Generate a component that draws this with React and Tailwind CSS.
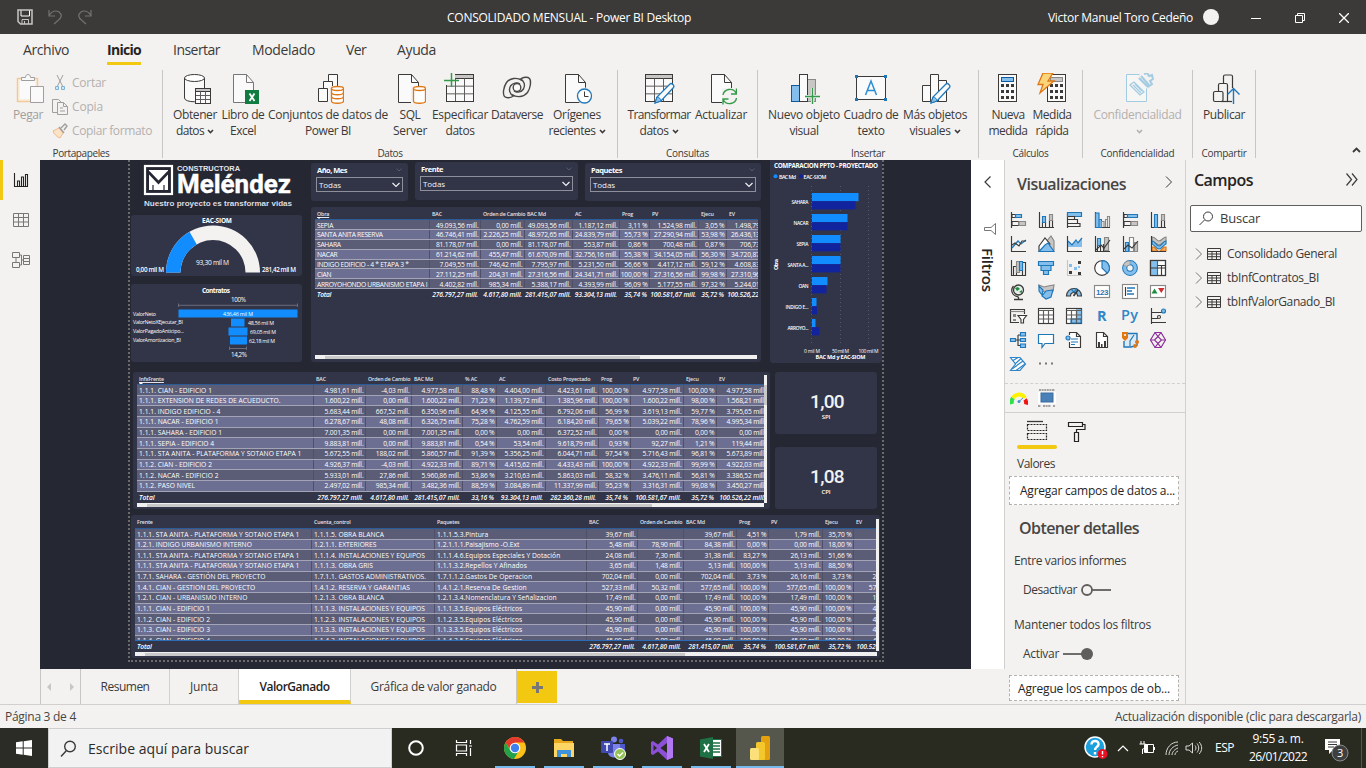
import React, { useLayoutEffect, useRef } from "react";

/* Text with a fixed advance width: spacing between letters is adapted to fill it. */
function T({ w, children, className = "" }) {
  const ref = useRef(null);
  useLayoutEffect(() => {
    const el = ref.current;
    el.style.letterSpacing = "0px";
    const n = el.textContent.length;
    el.style.letterSpacing = (w - el.getBoundingClientRect().width) / n + "px";
  }, [w, children]);
  return (
    <span ref={ref} className={"inline-block whitespace-pre " + className}>
      {children}
    </span>
  );
}

const D = "#3b3a39";
const B = "#1f77b8";
const L = "#83beec";
const G = "#c8c6c4";
const M = "#8a8886";

function Svg({ s = 32, w, h, vb, className = "", children }) {
  return (
    <svg
      width={w || s}
      height={h || s}
      viewBox={vb || `0 0 ${w || s} ${h || s}`}
      fill="none"
      stroke={D}
      strokeWidth="1"
      className={"block shrink-0 " + className}
    >
      {children}
    </svg>
  );
}

function Chevron({ color = D }) {
  return (
    <Svg w={7} h={5} className="ml-[3px] inline-block">
      <path d="M1 1l2.5 2.6L6 1" stroke={color} strokeWidth="1.5" />
    </Svg>
  );
}

/* ---------- title bar ---------- */
function TitleBar() {
  return (
    <div className="flex h-[34px] items-center bg-[#3b3a39] text-[12px] text-white">
      <div className="flex w-[447px] items-center pl-[17px]">
        <Svg s={16}>
          <path d="M1 1h14v14H3.500L1 12.500z" stroke="#c8c6c4" strokeWidth="1.5" />
          <path d="M4 1.500v5.500h8.500V1.500" stroke="#fff" />
          <path d="M5 15v-4.500h6.500V15M7.500 12v3" stroke="#c8c6c4" />
        </Svg>
        <Svg s={16} className="ml-[14px]">
          <path d="M2 1v6h6M2 6.500C5 2 9 1 12 3c3.500 2.500 2.500 6-.5 8L7 15" stroke="#74726f" strokeWidth="1.200" />
        </Svg>
        <Svg s={16} className="ml-[14px]">
          <path d="M14 1v6H8M14 6.500C11 2 7 1 4 3 .5 5.500 1.500 9 4.500 11L9 15" stroke="#74726f" strokeWidth="1.200" />
        </Svg>
      </div>
      <div className="w-[601px] pt-[1px]">
        <T w={244}>CONSOLIDADO MENSUAL - Power BI Desktop</T>
      </div>
      <div className="w-[155px] pt-[1px]">
        <T w={145}>Victor Manuel Toro Cedeño</T>
      </div>
      <div className="h-4 w-4 rounded-full bg-[#f3f2f1]" />
      <Svg w={10} h={10} className="ml-[32px] mt-[2px]">
        <path d="M0 5.500h10" stroke="#fff" />
      </Svg>
      <Svg w={10} h={10} className="ml-[34px] mt-[2px]">
        <path d="M.5 2.500h7v7h-7zM2.500 2.500v-2h7v7h-2" stroke="#fff" />
      </Svg>
      <Svg w={10} h={10} className="ml-[34px] mt-[2px]">
        <path d="M0 0l10 10M10 0L0 10" stroke="#fff" strokeWidth="1.300" />
      </Svg>
    </div>
  );
}

function MenuTabs() {
  const items = [
    ["Archivo", 46, "ml-[23px]"],
    ["Inicio", 34, "ml-[38px]"],
    ["Insertar", 47, "ml-[32px]"],
    ["Modelado", 63, "ml-[32px]"],
    ["Ver", 20, "ml-[31px]"],
    ["Ayuda", 39, "ml-[31px]"],
  ];
  return (
    <div className="flex h-[32px] bg-[#f3f2f1] text-[14px] text-[#3b3a39]">
      {items.map(([t, w, ml]) => (
        <div key={t} className={"flex h-[31px] flex-col " + ml}>
          <div className={"h-[28px] leading-[32px] " + (t === "Inicio" ? "font-bold text-[#252423]" : "")}>
            <T w={w}>{t}</T>
          </div>
          {t === "Inicio" && <div className="h-[3px] bg-[#f2c811]" />}
        </div>
      ))}
    </div>
  );
}

/* ---------- ribbon ---------- */
const Doc = ({ x = 5 }) => (
  <g transform={`translate(${x} 0)`}>
    <path d="M.5 1.500h13l7 8v20H.5z" fill="#fafafa" />
    <path d="M13.500 1.500v8h7" />
  </g>
);
const Grid = ({ x, y, w, h, cols = 3, rows = 3, head = 4 }) => (
  <g>
    <rect x={x} y={y} width={w} height={h} fill="#fafafa" />
    <rect x={x} y={y} width={w} height={head} fill="#c8c6c4" />
    {Array.from({ length: rows - 1 }, (_, i) => (
      <path key={"r" + i} d={`M${x} ${y + head + ((h - head) / rows) * (i + 1)}h${w}`} stroke="#605e5c" />
    ))}
    {Array.from({ length: cols - 1 }, (_, i) => (
      <path key={"c" + i} d={`M${x + (w / cols) * (i + 1)} ${y + head}v${h - head}`} stroke="#605e5c" />
    ))}
    <rect x={x} y={y} width={w} height={h} />
  </g>
);
const Pencil = ({ x, y }) => (
  <g transform={`translate(${x} ${y})`}>
    <path d="M1 20l2-6L16 1c1.500-1.500 5 1.500 3.500 3.500L7 18z" fill="#fafafa" stroke={B} strokeWidth="1.300" />
    <path d="M1 20l2-6c2 0 4 2 4 4z" fill={L} stroke={B} />
  </g>
);
const Calc = ({ x = 6, faded }) => (
  <g transform={`translate(${x} 0)`}>
    <rect x=".5" y="1.500" width="18" height="27" fill="#fafafa" />
    <rect x="3.500" y="4.500" width="12" height="4" fill={faded ? G : L} stroke={faded ? M : "#10599c"} />
    {[11, 17, 23].map((yy) =>
      [3, 8, 13].map((xx) => <rect key={xx + "-" + yy} x={xx} y={yy} width="3" height="3" fill={D} stroke="none" />)
    )}
  </g>
);
const OrangeDb = () => (
  <>
    <path d="M19.500 15v13c0 3 12 3 12 0V15" fill="#fff" stroke="#e07715" strokeWidth="1.300" />
    <ellipse cx="25.500" cy="15.500" rx="6" ry="2" fill="#fff" stroke="#e07715" strokeWidth="1.300" />
  </>
);
const DvLoop = () => (
  <path d="M21 7.500C16 4 9 5 5.500 9.500 2.500 14 1.500 21 3.500 23.500c2 2 6 1.500 9-.5-4-2-5-6.500-3-10 2-3 6.500-4 9.500-2" />
);

const RI = {
  obtener: (
    <Svg>
      <path d="M5.500 5v20c0 5 20 5 20 0V5" fill="#fafafa" />
      <ellipse cx="15.500" cy="5" rx="10" ry="3.500" fill="#fff" />
      <Grid x={16.500} y={15.500} w={15} h={15} head={3} />
    </Svg>
  ),
  excel: (
    <Svg>
      <g stroke="#797775"><Doc x={6} /></g>
      <rect x="18" y="17" width="14" height="14" fill="#107c41" stroke="none" />
      <path d="M22.500 20.500l5 7.500M27.500 20.500l-5 7.500" stroke="#fff" strokeWidth="1.800" />
    </Svg>
  ),
  conj: (
    <Svg>
      <path d="M16.500 17.500v-16h9v16z" fill="#fafafa" />
      <path d="M11.500 28.500V8.500h9v20" fill="#fafafa" />
      <path d="M6.500 15.500h9v13h-9z" fill="#fafafa" />
      <path d="M17 13h15v18H17z" fill="#f3f2f1" stroke="none" />
      <OrangeDb />
      <path d="M19.500 19.500c0 3 12 3 12 0M19.500 23.500c0 3 12 3 12 0" stroke="#e07715" strokeWidth="1.300" />
    </Svg>
  ),
  sql: (
    <Svg>
      <Doc x={4} />
      <path d="M17 13h15v18H17z" fill="#f3f2f1" stroke="none" />
      <OrangeDb />
    </Svg>
  ),
  espec: (
    <Svg>
      <Grid x={2.500} y={1.500} w={27} h={27} />
      <path d="M0 0h11v12H0z" fill="#f3f2f1" stroke="none" />
      <path d="M7.500 0v14M0 7.500h15" stroke="#349a49" strokeWidth="1.500" />
    </Svg>
  ),
  dataverse: (
    <Svg>
      <g strokeWidth="1.400" stroke="#4a4846">
        <DvLoop />
        <g transform="rotate(180 16 14.500)"><DvLoop /></g>
        <ellipse cx="16" cy="14.500" rx="3.800" ry="4" fill="#fafafa" />
      </g>
    </Svg>
  ),
  origenes: (
    <Svg>
      <Doc x={4} />
      <circle cx="23.500" cy="23" r="8.500" fill="#f3f2f1" stroke="none" />
      <circle cx="23.500" cy="23" r="7" fill="#fff" stroke={B} strokeWidth="1.300" />
      <path d="M23.500 18.500v5h4" />
    </Svg>
  ),
  transformar: (
    <Svg>
      <Grid x={2.500} y={1.500} w={27} h={27} />
      <Pencil x={11} y={10} />
    </Svg>
  ),
  actualizar: (
    <Svg>
      <Doc x={6} />
      <rect x="17" y="15" width="14" height="16" fill="#f3f2f1" stroke="none" />
      <path d="M18 22c1-6 10-8 13-2M31.500 15.500V21H26M31.500 25c-1 6-10 8-13 2M18 31.500V26h5.500" stroke="#349a49" strokeWidth="1.400" />
    </Svg>
  ),
  nuevo: (
    <Svg>
      <rect x="3.500" y="12.500" width="8" height="16" fill={L} stroke="#10599c" />
      <rect x="19.500" y="6.500" width="8" height="22" fill={G} stroke={M} />
      <rect x="11.500" y="1.500" width="8" height="27" fill="#fafafa" />
      <path d="M17 23.500h15M24.500 15v16" stroke="#f3f2f1" strokeWidth="3" />
      <path d="M24.500 15v16M17 23.500h15" stroke="#349a49" strokeWidth="1.400" />
    </Svg>
  ),
  cuadro: (
    <Svg>
      <rect x="1.500" y="3.500" width="29" height="23" fill="#fafafa" />
      <g fill={B} stroke="none">
        <rect x="0" y="2" width="3" height="3" /><rect x="29" y="2" width="3" height="3" />
        <rect x="0" y="25" width="3" height="3" /><rect x="29" y="25" width="3" height="3" />
      </g>
      <path d="M10.500 22L16 8l5.500 14M12.500 17.500h7" stroke="#2a8dd4" strokeWidth="1.500" />
    </Svg>
  ),
  mas: (
    <Svg>
      <path d="M3.500 12.500h8v16h-8zM11.500 1.500h8v27h-8zM19.500 7.500h8v21h-8z" fill="#fafafa" />
      <Pencil x={11} y={10} />
    </Svg>
  ),
  nueva: <Svg><Calc x={6} /></Svg>,
  medida: (
    <Svg>
      <Calc x={11} faded />
      <path d="M7 0h10l-5 8h6L4 20l3-8.500H2z" fill="#fcd57a" stroke="#e07715" strokeWidth="1.300" />
    </Svg>
  ),
  conf: (
    <Svg>
      <g stroke="#a3cbe2">
        <path d="M4.500 1.500h20v27h-20z" fill="#f6f6f5" />
        <path d="M14 4l7-5 11 6-6 12z" fill="#f3f2f1" stroke="none" />
        <path d="M17 5l9 9M19 3l8 9M22 1l3-1 2 3 3-1 1 4-3 2 2 3-4 3" strokeWidth="2" />
        <path d="M8 12l4-3 10 10-4 3zM11 12l8 8M13 11l7 7" strokeWidth="1.300" />
      </g>
    </Svg>
  ),
  publicar: (
    <Svg>
      <g strokeWidth="1.200">
        <path d="M15.500 10V3.500c0-1 .6-1.500 1.500-1.500h6c1 0 1.500.5 1.500 1.500V15" />
        <path d="M10.500 18v-6c0-1 .6-1.500 1.500-1.500h6c1 0 1.500.5 1.500 1.500v16.500" />
        <rect x="5.500" y="18.500" width="9.500" height="10" rx="1.500" />
        <path d="M13 28.500h11" />
      </g>
      <path d="M25.500 31V16M19.500 21.500l6-6 6 6" stroke={B} strokeWidth="1.400" />
    </Svg>
  ),
};

function Tool({ icon, lines, width, chev, faded }) {
  return (
    <div className={"flex shrink-0 flex-col items-center " + width + (faded ? " text-[#b3b0ad]" : "")}>
      {icon}
      <div className="mt-[2px] flex flex-col items-center text-[12px] leading-4">
        {lines.map(([t, w], i) => (
          <div key={i} className="flex h-4 items-center justify-center whitespace-nowrap">
            {t && <T w={w}>{t}</T>}
            {chev && i === lines.length - 1 && <Chevron color={faded ? "#b3b0ad" : D} />}
          </div>
        ))}
      </div>
    </div>
  );
}

function Group({ width, label, lw, children, pad = "" }) {
  return (
    <div className={"flex h-[88px] shrink-0 flex-col justify-between border-r border-[#c8c6c4] " + width}>
      <div className={"flex " + pad}>{children}</div>
      <div className="h-[13px] text-center text-[10px] leading-[16px]"><T w={lw}>{label}</T></div>
    </div>
  );
}

function Ribbon() {
  return (
    <div className="flex h-[94px] bg-[#f3f2f1] pt-[4px] text-[#3b3a39]">
      <Group width="w-[163px]" label="Portapapeles" lw={57} pad="pt-[3px]">
        <div className="flex w-[52px] shrink-0 flex-col pl-[13px] text-[#a19f9d]">
          <Svg>
            <path d="M4.500 5.500h20v23h-20z" fill="#fbf0e0" stroke="#f2c99a" strokeWidth="1.500" />
            <path d="M7 7h15v19H7z" fill="#fafafa" stroke="none" />
            <path d="M8.500 7.500v-3h4c0-4 5-4 5 0h4v3z" fill="#f8f8f8" stroke="#a19f9d" />
            <path d="M17.500 13.500h13v16h-13z" fill="#fafafa" stroke="#a19f9d" />
          </Svg>
          <div className="mt-[2px] text-[12px] leading-4"><T w={30}>Pegar</T></div>
        </div>
        <div className="flex flex-col text-[12px] text-[#b3b0ad]">
          <div className="flex h-6 items-center pb-[4px]">
            <Svg s={16}>
              <path d="M5 0l6 12M11 0L5 12" stroke="#a19f9d" />
              <path d="M3.500 11.500h3v3h-3zM9.500 11.500h3v3h-3z" stroke="#7ab4d8" fill="#cfe6f5" />
            </Svg>
            <T w={34} className="ml-[4px]">Cortar</T>
          </div>
          <div className="flex h-6 items-center pb-[4px]">
            <Svg s={16}>
              <path d="M5.500 13.500H.5V.5h6l3 3M5.500 3.500h6l4 4v8h-10zM8 9h3M8 12h5M11.500 3.500v4h4" stroke="#a19f9d" />
            </Svg>
            <T w={31} className="ml-[4px]">Copia</T>
          </div>
          <div className="flex h-6 items-center pb-[4px]">
            <Svg s={16}>
              <path d="M1 8l6-3 4 5-3 5C5 14 2 11 1 8z" fill="#fbe3c8" stroke="#efb98a" />
              <path d="M7 4l5 6M9 5l4-4 2 2-3 4" stroke="#a19f9d" strokeWidth="1.400" />
            </Svg>
            <T w={80} className="ml-[4px]">Copiar formato</T>
          </div>
        </div>
      </Group>
      <Group width="w-[455px]" label="Datos" lw={25} pad="pt-[3px] pl-[6px]">
        <Tool icon={RI.obtener} width="w-[52px]" lines={[["Obtener", 44], ["datos", 28]]} chev />
        <Tool icon={RI.excel} width="w-[44px]" lines={[["Libro de", 43], ["Excel", 26]]} />
        <Tool icon={RI.conj} width="w-[126px]" lines={[["Conjuntos de datos de", 120], ["Power BI", 46]]} />
        <Tool icon={RI.sql} width="w-[38px]" lines={[["SQL", 21], ["Server", 34]]} />
        <Tool icon={RI.espec} width="w-[62px]" lines={[["Especificar", 56], ["datos", 29]]} />
        <Tool icon={RI.dataverse} width="w-[52px]" lines={[["Dataverse", 52]]} />
        <Tool icon={RI.origenes} width="w-[68px]" lines={[["Orígenes", 48], ["recientes", 47]]} chev />
      </Group>
      <Group width="w-[140px]" label="Consultas" lw={43} pad="pt-[3px] pl-[9px]">
        <Tool icon={RI.transformar} width="w-[64px]" lines={[["Transformar", 63], ["datos", 29]]} chev />
        <Tool icon={RI.actualizar} width="w-[60px]" lines={[["Actualizar", 52]]} />
      </Group>
      <Group width="w-[221px]" label="Insertar" lw={34} pad="pt-[3px] pl-[8px]">
        <Tool icon={RI.nuevo} width="w-[76px]" lines={[["Nuevo objeto", 72], ["visual", 29]]} />
        <Tool icon={RI.cuadro} width="w-[58px]" lines={[["Cuadro de", 55], ["texto", 27]]} />
        <Tool icon={RI.mas} width="w-[70px]" lines={[["Más objetos", 64], ["visuales", 41]]} chev />
      </Group>
      <Group width="w-[104px]" label="Cálculos" lw={36} pad="pt-[3px] pl-[8px]">
        <Tool icon={RI.nueva} width="w-[42px]" lines={[["Nueva", 33], ["medida", 39]]} />
        <Tool icon={RI.medida} width="w-[46px]" lines={[["Medida", 39], ["rápida", 33]]} />
      </Group>
      <Group width="w-[110px]" label="Confidencialidad" lw={74} pad="pt-[3px] justify-center">
        <Tool icon={RI.conf} width="w-[92px]" lines={[["Confidencialidad", 88], ["", 0]]} chev faded />
      </Group>
      <Group width="w-[63px]" label="Compartir" lw={45} pad="pt-[3px] justify-center">
        <Tool icon={RI.publicar} width="w-[60px]" lines={[["Publicar", 42]]} />
      </Group>
      <div className="flex flex-1 items-end justify-end pb-[7px] pr-[5px]">
        <Svg w={9} h={6}><path d="M1 5l3.500-3.500L8 5" strokeWidth="1.800" /></Svg>
      </div>
    </div>
  );
}

/* ---------- left rail ---------- */
function Rail() {
  return (
    <div className="flex w-10 shrink-0 flex-col bg-[#f3f2f1]">
      <div className="flex h-10 items-center border-l-[3px] border-[#f2c811] pl-[10px]">
        <Svg s={16}>
          <path d="M1.500 1v13.500H15M4.500 14V9h2v5M8.500 14V5h2v9M12.500 14V2.500h2V14" stroke="#252423" strokeWidth="1.100" />
        </Svg>
      </div>
      <div className="flex h-10 items-center pl-[13px]">
        <Svg s={16}><path d="M.5 1.500h15v13H.5zM.5 5.500h15M.5 10h15M5.500 1.500v13M10.500 1.500v13" stroke="#797775" /></Svg>
      </div>
      <div className="flex h-10 items-center pl-[12px]">
        <Svg w={18} h={18}><path d="M.5 1.500h7v5h-7zM.5 11.500h7v5h-7zM11.500 4.500h6v9h-6zM11.500 7.500h6M11.500 10.500h6M4 6.500v5M7.500 4h2v5h2M7.500 14h2V9" stroke="#797775" /></Svg>
      </div>
    </div>
  );
}

/* ---------- report ---------- */
const card = "bg-[#323548] rounded-[3px]";

function Slicer({ title, tw, width, mt }) {
  return (
    <div className={card + " h-[38px] shrink-0 px-[5px] " + width + " " + mt}>
      <div className="flex h-[14px] items-center justify-between pl-[1px] pr-[1px] text-[7.5px] font-bold text-white">
        <T w={tw} className="pt-[2px]">{title}</T>
        <Svg w={6} h={4}><path d="M.5 .5l2.500 2.500L5.500 .5" stroke="#55576a" /></Svg>
      </div>
      <div className="flex h-[15px] items-center justify-between border border-[#8d8f9b] pl-[2px] pr-[2px] text-[8px] text-[#f0f0f3]">
        <T w={22} className="pt-[1px] font-medium">Todas</T>
        <Svg w={8} h={6}><path d="M.5 1l3.500 3.500L7.500 1" stroke="#f0f0f3" strokeWidth="1.200" /></Svg>
      </div>
    </div>
  );
}

function Row({ cells, cols, odd, total, left = 1, h, names }) {
  return (
    <div
      className={
        "flex shrink-0 text-[6.7px] text-white " +
        (total
          ? "h-[12px] font-semibold italic leading-[12px] tracking-[-0.14px] "
          : (odd ? "bg-[#6d6f92] " : "bg-[#5b5c75] ") + "border-b border-[#a3a4b5] font-medium leading-[10px] tracking-[-0.16px] ") +
        (total ? "" : h)
      }
    >
      {cells.map((c, i) => (
        <div
          key={i}
          className={
            "shrink-0 whitespace-pre " +
            (i < left ? "pl-[2px] text-left " + names + " " : "text-right ") +
            (total ? "pr-[3px] " : "border-r border-[#4f5068] pr-[1.5px] pt-[0.5px] ") +
            cols[i]
          }
        >
          {c}
        </div>
      ))}
    </div>
  );
}

function Head({ names, cols, sort, h = "h-[13px]" }) {
  return (
    <div className={"flex shrink-0 border-b border-[#2a5c9a] text-[5.3px] font-semibold tracking-[-0.16px] text-[#e4e4ea] " + h}>
      {names.map((n, i) => (
        <div key={i} className={"shrink-0 whitespace-nowrap pl-[2px] pt-[3px] leading-[8px] " + cols[i]}>
          <span className={i === 0 && sort ? "underline" : ""}>{n}</span>
          {i === 0 && sort && (
            <svg width="4" height="2" viewBox="0 0 4 2" className="-mt-px block">
              <path d={sort === "down" ? "M0 0h4L2 2z" : "M0 2h4L2 0z"} fill="#fff" />
            </svg>
          )}
        </div>
      ))}
    </div>
  );
}

const mill = (row, plain) => row.map((v, i) => (plain.includes(i) || v === "" ? v : v + " mill."));

const c1 = ["w-[115px]", "w-[51px]", "w-[44px]", "w-[48px]", "w-[47px]", "w-[30px]", "w-[49px]", "w-[28px]", "w-[49px]"];
const t1 = [
  "SEPIA|49.093,56|0,00|49.093,56|1.187,12|3,11 %|1.524,98|3,05 %|1.498,79",
  "SANTA ANITA RESERVA|46.746,41|2.226,25|48.972,65|24.839,79|55,73 %|27.290,94|53,98 %|26.436,13",
  "SAHARA|81.178,07|0,00|81.178,07|553,87|0,86 %|700,48|0,87 %|706,73",
  "NACAR|61.214,62|455,47|61.670,09|32.756,16|55,38 %|34.154,05|56,30 %|34.720,87",
  "INDIGO EDIFICIO - 4 * ETAPA 3 *|7.049,55|746,42|7.795,97|5.231,50|56,66 %|4.417,12|59,12 %|4.608,83",
  "CIAN|27.112,25|204,31|27.316,56|24.341,71|100,00 %|27.316,56|99,98 %|27.310,96",
  "ARROYOHONDO URBANISMO ETAPA I|4.402,82|985,34|5.388,17|4.393,99|96,09 %|5.177,55|97,32 %|5.244,01",
  "Total|276.797,27|4.617,80|281.415,07|93.304,13|35,74 %|100.581,67|35,72 %|100.526,22",
];
const c2 = ["w-[177px]", "w-[52px]", "w-[46px]", "w-[51px]", "w-[34px]", "w-[49px]", "w-[53px]", "w-[32px]", "w-[53px]", "w-[33px]", "w-[51px]"];
const t2 = [
  "1.1.1. CIAN - EDIFICIO 1|4.981,61|-4,03|4.977,58|88,48 %|4.404,00|4.423,61|100,00 %|4.977,58|100,00 %|4.977,58",
  "1.1.1. EXTENSION DE REDES DE ACUEDUCTO.|1.600,22|0,00|1.600,22|71,22 %|1.139,72|1.385,96|100,00 %|1.600,22|98,00 %|1.568,21",
  "1.1.1. INDIGO EDIFICIO - 4|5.683,44|667,52|6.350,96|64,96 %|4.125,55|6.792,06|56,99 %|3.619,13|59,77 %|3.795,65",
  "1.1.1. NACAR - EDIFICIO 1|6.278,67|48,08|6.326,75|75,28 %|4.762,59|6.184,20|79,65 %|5.039,22|78,96 %|4.995,34",
  "1.1.1. SAHARA - EDIFICIO 1|7.001,35|0,00|7.001,35|0,00 %|0,00|6.372,52|0,00 %|0,00|0,00 %|0,00",
  "1.1.1. SEPIA - EDIFICIO 4|9.883,81|0,00|9.883,81|0,54 %|53,54|9.618,79|0,93 %|92,27|1,21 %|119,44",
  "1.1.1. STA ANITA - PLATAFORMA Y SOTANO ETAPA 1|5.672,55|188,02|5.860,57|91,39 %|5.356,25|6.044,71|97,54 %|5.716,43|96,81 %|5.673,89",
  "1.1.2. CIAN - EDIFICIO 2|4.926,37|-4,03|4.922,33|89,71 %|4.415,62|4.433,43|100,00 %|4.922,33|99,99 %|4.922,03",
  "1.1.2. NACAR - EDIFICIO 2|5.933,01|27,86|5.960,86|53,86 %|3.210,63|5.863,03|58,32 %|3.476,11|56,81 %|3.386,52",
  "1.1.2. PASO NIVEL|2.497,02|985,34|3.482,36|88,59 %|3.084,89|11.337,99|95,23 %|3.316,31|99,08 %|3.450,27",
  "Total|276.797,27|4.617,80|281.415,07|33,16 %|93.304,13|282.360,28|35,74 %|100.581,67|35,72 %|100.526,22",
];
const c3 = ["w-[177px]", "w-[123px]", "w-[152px]", "w-[51px]", "w-[46px]", "w-[53px]", "w-[32px]", "w-[54px]", "w-[31px]", "w-[51px]"];
const t3 = [
  "1.1.1. STA ANITA - PLATAFORMA Y SOTANO ETAPA 1|1.1.1.5. OBRA BLANCA|1.1.1.5.3.Pintura|39,67||39,67|4,51 %|1,79|35,70 %|",
  "1.2.1. INDIGO URBANISMO INTERNO|1.2.1.1. EXTERIORES|1.2.1.1.1.Paisajismo -O.Ext|5,48|78,90|84,38|0,00 %|0,00|18,00 %|",
  "1.1.1. STA ANITA - PLATAFORMA Y SOTANO ETAPA 1|1.1.1.4. INSTALACIONES Y EQUIPOS|1.1.1.4.6.Equipos Especiales Y Dotación|24,08|7,30|31,38|83,27 %|26,13|51,66 %|",
  "1.1.1. STA ANITA - PLATAFORMA Y SOTANO ETAPA 1|1.1.1.3. OBRA GRIS|1.1.1.3.2.Repellos Y Afinados|3,65|1,48|5,13|100,00 %|5,13|88,50 %|",
  "1.7.1. SAHARA - GESTIÓN DEL PROYECTO|1.7.1.1. GASTOS ADMINISTRATIVOS.|1.7.1.1.2.Gastos De Operacion|702,04|0,00|702,04|3,73 %|26,16|3,73 %|26,16",
  "1.4.1. CIAN - GESTION DEL PROYECTO|1.4.1.2. RESERVA Y GARANTIAS|1.4.1.2.1.Reserva De Gestion|527,33|50,32|577,65|100,00 %|577,65|100,00 %|577,65",
  "1.2.1. CIAN - URBANISMO INTERNO|1.2.1.3. OBRA BLANCA|1.2.1.3.4.Nomenclatura Y Señalizacion|17,49|0,00|17,49|100,00 %|17,49|100,00 %|17,49",
  "1.1.1. CIAN - EDIFICIO 1|1.1.1.3. INSTALACIONES Y EQUIPOS|1.1.1.3.5.Equipos Eléctricos|45,90|0,00|45,90|100,00 %|45,90|100,00 %|45,90",
  "1.1.2. CIAN - EDIFICIO 2|1.1.2.3. INSTALACIONES Y EQUIPOS|1.1.2.3.5.Equipos Eléctricos|45,90|0,00|45,90|100,00 %|45,90|100,00 %|45,90",
  "1.1.3. CIAN - EDIFICIO 3|1.1.3.3. INSTALACIONES Y EQUIPOS|1.1.3.3.5.Equipos Eléctricos|45,90|0,00|45,90|100,00 %|45,90|100,00 %|45,90",
  "1.1.4. CIAN - EDIFICIO 4|1.1.4.3. INSTALACIONES Y EQUIPOS|1.1.4.3.5.Equipos Eléctricos|45,90|0,00|45,90|100,00 %|45,90|100,00 %|45,90",
  "Total|||276.797,27|4.617,80|281.415,07|35,74 %|100.581,67|35,72 %|100.526,22",
];

function HScroll({ thumb, className = "" }) {
  return (
    <div className={"flex h-[4px] shrink-0 items-center bg-[#f0f0f0] pl-[10px] " + className}>
      <div className={"h-[3px] bg-[#c9c9c9] " + thumb} />
    </div>
  );
}

function Logo() {
  return (
    <svg width="171" height="55" viewBox="0 0 171 55" className="block shrink-0">
      <rect x="14" y="6" width="27" height="28" fill="none" stroke="#fff" strokeWidth="2.200" />
      <path d="M18 10h19v20H18z" fill="#fff" />
      <path d="M17.500 12l10 10.500 10-10.500" fill="none" stroke="#252733" strokeWidth="2.600" />
      <path d="M22 30v-5M33 30v-5" fill="none" stroke="#252733" strokeWidth="1.200" />
      <text x="46" y="10.800" textLength="63" lengthAdjust="spacingAndGlyphs" fontFamily="Liberation Sans" fontWeight="700" fontSize="8" fill="#e6e6e8">CONSTRUCTORA</text>
      <text x="46" y="33" textLength="114" lengthAdjust="spacingAndGlyphs" fontFamily="Roboto" fontWeight="700" fontSize="25.500" fill="#fff" stroke="#fff" strokeWidth=".4">Meléndez</text>
      <text x="13" y="45.500" textLength="148" lengthAdjust="spacingAndGlyphs" fontFamily="Liberation Sans" fontWeight="700" fontSize="8" fill="#dcdce0">Nuestro proyecto es transformar vidas</text>
    </svg>
  );
}

function Gauge() {
  return (
    <div className={card + " h-[61px]"}>
      <svg width="171" height="61" viewBox="0 0 171 61" fontFamily="Open Sans" fill="#fff" className="block">
        <text x="71" y="8" fontSize="6.500" fontWeight="700" textLength="30">EAC-SIOM</text>
        <path d="M35 57.500a47 47 0 0 1 94 0h-14.500a32.500 32.500 0 0 0-65 0z" fill="#f3f2f1" />
        <path d="M35 57.500A47 47 0 0 1 58.500 16.800L65.800 29.400A32.500 32.500 0 0 0 49.500 57.500z" fill="#118dff" />
        <text x="65" y="49.500" fontSize="6.700" textLength="33">93,30 mil M</text>
        <text x="5" y="57" fontSize="6.300" fontWeight="600" textLength="28">0,00 mil M</text>
        <text x="131" y="57" fontSize="6.300" fontWeight="600" textLength="34">281,42 mil M</text>
      </svg>
    </div>
  );
}

function Funnel() {
  return (
    <div className={card + " mt-[8px] h-[78px]"}>
      <svg width="171" height="78" viewBox="0 0 171 78" fontFamily="Open Sans" fill="#fff" className="block">
        <text x="71" y="8.500" fontSize="6.500" fontWeight="700" textLength="28">Contratos</text>
        <text x="100" y="18" fontSize="6.300" fontWeight="500" textLength="15">100%</text>
        <path d="M47.500 19.500v3.500M47.500 21.300h119M166.500 19.500v3.500M98.500 62.500v3.500M98.500 64.500h17M115.500 62.500v3.500" stroke="#6a6c7c" strokeWidth="1" fill="none" />
        <g fill="#118dff">
          <rect x="47.500" y="25.500" width="119" height="8" />
          <rect x="100" y="34.500" width="13.500" height="8" />
          <rect x="97.500" y="43.500" width="19" height="8" />
          <rect x="99" y="52.500" width="17" height="8" />
        </g>
        <text x="92" y="31.500" fontSize="5.300" fontWeight="500" textLength="30">436,46 mil M</text>
        <g fontSize="5.300" fontWeight="500">
          <text x="2" y="31.500" textLength="23">ValorNeto</text>
          <text x="2" y="40" textLength="50">ValorNetoXEjecutar_BI</text>
          <text x="2" y="49" textLength="51">ValorPagadoAnticipo...</text>
          <text x="2" y="58" textLength="48">ValorAmortizacion_BI</text>
          <text x="117" y="41" textLength="26">48,56 mil M</text>
          <text x="119" y="50" textLength="26">69,05 mil M</text>
          <text x="118" y="59" textLength="26">62,18 mil M</text>
        </g>
        <text x="100" y="73" fontSize="6.300" fontWeight="500" textLength="16">14,2%</text>
      </svg>
    </div>
  );
}

function BarChart() {
  const rows = [["SAHARA", 46.5, 43.5, 17], ["NACAR", 35.5, 35.5, 15], ["SEPIA", 28.5, 28.5, 12], ["SANTA A...", 28.5, 28.5, 21], ["CIAN", 15.5, 14.5, 10], ["INDIGO E...", 4.5, 5, 23], ["ARROYO...", 3.5, 7.5, 21]];
  return (
    <div className={card + " ml-[9px] h-[203px] w-[112px] shrink-0 rounded-t-none"}>
      <svg width="112" height="203" viewBox="0 0 112 203" fontFamily="Open Sans" fill="#fff" className="block">
        <text x="4" y="8" fontSize="6.300" fontWeight="700" textLength="104">COMPARACION PPTO - PROYECTADO</text>
        <circle cx="5.500" cy="16.300" r="2" fill="#118dff" />
        <circle cx="31" cy="16.300" r="2" fill="#12239e" />
        <text x="9" y="18.500" fontSize="5.300" fontWeight="600" textLength="17">BAC Md</text>
        <text x="33.500" y="18.500" fontSize="5.300" fontWeight="600" textLength="23">EAC-SIOM</text>
        <path d="M41.500 26v160M70.500 26v160M98.500 26v160" stroke="#555869" strokeDasharray="1 3" />
        {rows.map(([n, a, b, w], i) => (
          <g key={n}>
            <rect x="42" y={33 + i * 21} width={a} height="8.200" fill="#118dff" />
            <rect x="42" y={41.2 + i * 21} width={b} height="8.200" fill="#12239e" />
            <text x={38.5 - w} y={43.5 + i * 21} fontSize="4.800" fontWeight="600" textLength={w}>{n}</text>
          </g>
        ))}
        <text transform="translate(8 110) rotate(-90)" fontSize="5.500" fontWeight="700" textLength="11">Obra</text>
        <g fontSize="5" fontWeight="500">
          <text x="34" y="193" textLength="16">0 mil M</text>
          <text x="62" y="193" textLength="17">50 mil M</text>
          <text x="88.500" y="193" textLength="20">100 mil M</text>
        </g>
        <text x="45.500" y="199" fontSize="5.500" fontWeight="700" textLength="50">BAC Md y EAC-SIOM</text>
      </svg>
    </div>
  );
}

function Kpi({ v, l, className = "" }) {
  return (
    <div className={card + " flex h-[62px] w-[102px] flex-col items-center pt-[18px] text-white " + className}>
      <div className="pl-[2px] font-['Roboto'] text-[19px] font-medium leading-[24px] text-[#f2f2f2]"><T w={34}>{v}</T></div>
      <div className="text-[6px] font-semibold leading-[7px] tracking-[-0.1px]">{l}</div>
    </div>
  );
}

function Report() {
  return (
    <div className="h-[509px] w-[931px] shrink-0 overflow-hidden bg-[#252733] pl-[88px] font-['Open_Sans',sans-serif]">
      <div className="h-[502px] w-[756px] border-x-2 border-b-2 border-dotted border-[#6b6b6b]">
        <div className="flex h-[203px] pl-[1px]">
          <div className="flex w-[171px] flex-col">
            <Logo />
            <Gauge />
            <Funnel />
          </div>
          <div className="ml-[9px] w-[450px]">
            <div className="flex h-[47px]">
              <Slicer title="Año, Mes" tw={30} width="w-[97px]" mt="mt-[3px]" />
              <Slicer title="Frente" tw={22} width="w-[163px] ml-[7px]" mt="mt-[2px]" />
              <Slicer title="Paquetes" tw={31} width="w-[176px] ml-[7px]" mt="mt-[3px]" />
            </div>
            <div className={card + " flex h-[155px] flex-col pl-[4px]"}>
              <div className="flex h-[146px] w-[443px] flex-col overflow-hidden">
                <Head cols={c1} sort="down" names={["Obra", "BAC", "Orden de Cambio", "BAC Md", "AC", "Prog", "PV", "Ejecu", "EV"]} />
                {t1.map((r, i) => (
                  <Row key={i} names="tracking-[-0.27px]" cells={mill(r.split("|"), [0, 5, 7])} cols={c1} odd={i % 2} total={i === 7} h="h-[9.9px]" />
                ))}
              </div>
              <HScroll className="mt-[2px] w-[442px]" thumb="w-[315px]" />
            </div>
          </div>
          <BarChart />
        </div>
        <div className="mt-[9px] flex h-[137px] pl-[3px]">
          <div className={card + " flex w-[637px] pl-[4px]"}>
            <div className="flex w-[627px] flex-col">
              <div className="flex h-[131px] flex-col overflow-hidden">
                <Head cols={c2} sort="up" names={["InfxFrente", "BAC", "Orden de Cambio", "BAC Md", "% AC", "AC", "Costo Proyectado", "Prog", "PV", "Ejecu", "EV"]} />
                {t2.map((r, i) => (
                  <Row key={i} names="tracking-[0.04px]" cells={mill(r.split("|"), [0, 4, 7, 9])} cols={c2} odd={i % 2} total={i === 10} h="h-[10.67px]" />
                ))}
              </div>
              <HScroll thumb="w-[505px]" />
            </div>
            <div className="mt-[3px] h-[128px] w-[3px] bg-[#f0f0f0] pt-[10px]">
              <div className="h-[20px] bg-[#c9c9c9]" />
            </div>
          </div>
          <div className="ml-[5px] flex flex-col">
            <Kpi v="1,00" l="SPI" />
            <Kpi v="1,08" l="CPI" className="mt-[13px]" />
          </div>
        </div>
        <div className="mt-[6px] pl-[1px]">
          <div className={card + " flex h-[143px] w-[749px] flex-col pl-[4px]"}>
            <div className="flex">
              <div className="flex h-[137px] w-[741px] flex-col overflow-hidden">
                <div className="flex h-[126px] shrink-0 flex-col overflow-hidden border-b border-[#2a6cb5]">
                  <Head h="h-[14px]" cols={c3} names={["Frente", "Cuenta_control", "Paquetes", "BAC", "Orden de Cambio", "BAC Md", "Prog", "PV", "Ejecu", "EV"]} />
                  {t3.slice(0, 11).map((r, i) => (
                    <Row key={i} names="tracking-[0.04px]" left={3} cells={mill(r.split("|"), [0, 1, 2, 6, 8])} cols={c3} odd={i % 2} h="h-[10.67px]" />
                  ))}
                </div>
                <Row names="" left={3} cells={mill(t3[11].split("|"), [0, 1, 2, 6, 8])} cols={c3} total />
              </div>
              <div className="mt-[4px] h-[132px] w-[3px] bg-[#f0f0f0]" />
            </div>
            <HScroll className="w-[742px]" thumb="w-[540px]" />
          </div>
        </div>
      </div>
    </div>
  );
}

/* ---------- side panes ---------- */
function FiltersStrip() {
  return (
    <div className="flex w-[34px] shrink-0 flex-col items-center border-r border-[#d2d0ce] bg-white">
      <Svg w={7} h={12} className="mt-[16px]"><path d="M6.500 .5L1 6l5.500 5.500" strokeWidth="1.200" /></Svg>
      <Svg w={12} h={12} className="ml-[4px] mt-[35px]">
        <path d="M11.500 .5v11L7 7.500H.5v-3H7z" stroke="#797775" />
      </Svg>
      <div className="mt-[13px] text-[15px] font-semibold leading-[18px] text-[#252423] [writing-mode:vertical-rl]">
        <span className="tracking-[-0.2px]">Filtros</span>
      </div>
    </div>
  );
}

const Ax = () => <path d="M1.500 0v15.500H16" />;
const visIcons = [
  <><path d="M1.500 0v16" /><path d="M2 2.500h3.500v3H2z" fill="#fff" /><path d="M5.500 2.500h6v3h-6z" fill={L} stroke={B} /><path d="M2 9.500h7v4H2z" /><path d="M9 9.500h6.500v4H9z" fill={G} stroke={M} /></>,
  <><Ax /><path d="M4.500 10.500h3v5h-3z" fill="#fff" /><path d="M4.500 4.500h3v6h-3z" fill={L} stroke={B} /><path d="M11.500 8.500h3v7h-3z" /><path d="M11.500 2.500h3v6h-3z" fill={G} stroke={M} /></>,
  <><path d="M1.500 1v15" /><path d="M1.500 .5h14v4h-14z" fill={L} stroke={B} /><path d="M2 4.500h6.500v3H2M2 7.500h9.500v4H2M2 11.500h12v3H2" /></>,
  <><path d="M1.500 0v15.500H16" /><path d="M1.500 1h3.500v14.500H1.500zM5 7.500h2.500v8H5z" fill={L} stroke={B} /><path d="M7.500 15V9.500h2.500V15M11.500 15V7.500h2V15M13.500 15V4.500h2V15" stroke={M} /></>,
  <><path d="M1.500 0v16" /><path d="M2 2.500h3.500v3H2z" /><path d="M5.500 2.500h10v3h-10z" fill={L} stroke={B} /><path d="M2 9.500h7v4H2z" /><path d="M9 9.500h6.500v4H9z" fill={G} stroke={M} /></>,
  <><Ax /><path d="M4.500 2.500h3v13h-3z" fill={L} stroke={B} /><path d="M11.500 8.500h3v7h-3z" /><path d="M11.500 2.500h3v6h-3z" fill={G} stroke={M} /></>,
  <><Ax /><path d="M2 12l6-7 3 3 5-4" stroke={B} strokeWidth="1.300" /><path d="M2 9l3-2 4 3 3-5h4" /></>,
  <><path d="M8 6l5-6 3 5v9H9z" fill={G} stroke={M} /><path d="M1 10l6-8 5 6-5 7H1z" fill="#fff" /><path d="M1 15.500L7 9l3-2 6 8.500z" fill={L} stroke={B} /></>,
  <><path d="M2 5l4 5 4-5 2 3 4-5v8H2z" fill={L} stroke="none" /><path d="M1.500 0v15.500H16" /><path d="M2 5l4 4 4-5 2 3 4-5" stroke={B} strokeWidth="1.300" /></>,
  <><Ax /><path d="M3.500 9.500h3v6h-3zM9.500 8.500h3v7h-3z" fill="#fff" /><path d="M3.500 2.500h3v7h-3z" fill={L} stroke={B} /><path d="M10.500 1.500h4v13h-4z" fill={G} stroke={M} /><path d="M2 14l5-5 3 3 6-8" /></>,
  <><Ax /><path d="M3.500 6.500h3v9h-3z" fill={L} stroke={B} /><path d="M7.500 1.500h4v14h-4z" fill="#fff" stroke={M} /><path d="M12.500 6.500h3v9h-3z" fill={G} stroke={M} /><path d="M2 13l4-4 4 3 6-7" /></>,
  <><path d="M2 1c4 0 4 4 7 4s4-4 7-4v4c-3 0-4 4-7 4S5 5 2 5z" fill={G} stroke={M} /><path d="M2 5c3 0 4 5 7 5s4-5 7-5v3c-3 1-4 5-7 5s-4-4-7-5z" fill={L} stroke={B} /><path d="M2 11h2l4 4H2zM16 11h-2l-4 4h6z" fill="#f7b26a" stroke="#e07715" /><path d="M1.500 0v15.500H16" /></>,
  <><Ax /><path d="M3.500 6.500h3v9h-3zM12.500 2.500h3v13h-3z" /><path d="M6.500 1.500h3v11h-3z" fill={G} stroke={M} /><path d="M9.500 1.500h3v9h-3z" fill={L} stroke={B} /></>,
  <path d="M.5 1.500h15v4H.5zM3 5.500h10v5H3zM5.500 10.500h5v4h-5z" fill={L} stroke={B} />,
  <><path d="M1.500 0v15.500H16" stroke={G} /><path d="M3 11h3v3H3zM12 1h3v3h-3zM12 12h3v3h-3z" fill={D} stroke="none" /><path d="M3 4h3v3H3zM8 7h3v3H8zM12 6h2v2h-2z" fill={L} stroke="none" /></>,
  <><circle cx="8" cy="8" r="7.300" fill="#fff" /><path d="M8 .7a7.300 7.300 0 0 1 5.200 12.500L8 8z" fill={L} stroke={B} /></>,
  <><circle cx="8" cy="8" r="5.300" stroke={B} strokeWidth="5.200" /><circle cx="8" cy="8" r="5.300" stroke={L} strokeWidth="3.200" /><path d="M8 .7a7.300 7.300 0 0 0-6.500 4l3 2A4 4 0 0 1 8 5z" fill={G} stroke={M} strokeWidth=".6" /></>,
  <><rect x=".5" y=".5" width="15" height="15" fill="#fff" /><path d="M.5 .5h7v15h-7z" fill={L} stroke={B} /><path d="M.5 8h15M7.500 5.500h8M11.500 5.500v10" /><rect x=".5" y=".5" width="15" height="15" /></>,
  <><circle cx="8.500" cy="6" r="5" fill="#e6f0ea" stroke={D} strokeWidth="1.300" /><path d="M5 4l3-1 2 2-3 2zM9 8l3-2v3z" fill="#1e8f3f" stroke="none" /><path d="M3.500 2C0 6 2 12 8.500 13M8.500 13v2.500M4 15.500h9" strokeWidth="1.300" /></>,
  <><path d="M1 1l5 2 4-1 6-1-1 6-7 1-6-1z" fill={G} stroke={M} /><path d="M1 2l4 4-1 5-3-4zM8 7l7-1-2 7-5 2-4-3z" fill={L} stroke={B} /></>,
  <><path d="M.5 12a7.500 7.500 0 0 1 15 0h-4a3.500 3.500 0 0 0-7 0z" fill={L} stroke={D} /><path d="M5 5l3 3 3-4" stroke={B} /><path d="M7.500 12L12 6" strokeWidth="1.700" /></>,
  <><rect x=".5" y="1.500" width="15" height="12" fill="#fff" stroke={M} /><text x="2" y="10.700" fontSize="8" fontFamily="Liberation Sans" fontWeight="700" fill={B} stroke="none" textLength="12.500">123</text></>,
  <><rect x=".5" y=".5" width="15" height="14" fill="#fff" stroke={M} /><path d="M3.500 3v9" /><path d="M5 4h8M5 7h5M5 10h7" stroke={B} strokeWidth="1.500" /></>,
  <><rect x=".5" y="1.500" width="15" height="12" fill="#fff" stroke={M} /><path d="M1.500 9.500l3-5 3 5z" fill="#1e8f3f" stroke="none" /><path d="M8 4h6.500l-3.200 5z" fill="#c9302c" stroke="none" /></>,
  <><path d="M9 14.500H.5v-13h14V6" /><path d="M3 6h3v3H3zM3 11h3v2H3z" fill={M} stroke="none" /><path d="M.5 3.500h14" stroke={M} /><path d="M8 7.500h8.500l-3 4V15h-2.500v-3.500z" fill="#fff" /></>,
  <><rect x=".5" y=".5" width="15" height="15" fill="#fff" /><path d="M.5 2.500h15M.5 7h15M.5 11h15M5.500 2v13M10.500 2v13" stroke="#605e5c" /></>,
  <><rect x=".5" y=".5" width="15" height="15" fill="#fff" /><path d="M10.500 2h5v13h-5zM5 11h10v4H5z" fill={L} stroke={B} /><path d="M.5 2.500h15M.5 7h15M.5 11h15M5.500 2v13M10.500 2v13" stroke="#605e5c" /></>,
  <text x="3" y="13" fontSize="14.500" fontWeight="700" fontFamily="Open Sans" fill="#2f86c8" stroke="none">R</text>,
  <text x="-1" y="12" fontSize="14.500" fontWeight="600" fontFamily="Open Sans" fill="#2f86c8" stroke="none" textLength="17">Py</text>,
  <><path d="M1.500 0v16M2 4.500h10M2 10.500h6M2 14.500h14" /><circle cx="13.500" cy="3" r="2" fill={L} stroke={B} /><circle cx="9" cy="9" r="1.500" fill="#fff" /></>,
  <><path d="M5 8h5M8 3v11M8 3h3M8 13.500h3" /><path d="M.5 6.500h5v3h-5zM10.500 .5h5v3.500h-5zM10.500 6.500h5v3h-5zM10.500 12h5v3.500h-5z" fill={L} stroke={B} /></>,
  <path d="M.5 2.500h15v9H7l-3 4v-4H.5z" fill="#fff" stroke={B} strokeWidth="1.200" />,
  <><path d="M3.500 3V.5h7l4 4v11h-11V10" fill="#fff" /><path d="M10.500 .5v4h4" /><circle cx="2" cy="6" r="2" fill={L} stroke={B} /><path d="M5 7h7M5 10h7M5 12.500h4" stroke={B} /></>,
  <><path d="M2.500 .5h7l4 4v11h-11z" fill="#fff" /><path d="M9.500 .5v4h4" /><path d="M4 10h2v5H4zM7 12h1.500v3H7zM10 9h2v6h-2z" fill={D} stroke="none" /></>,
  <><path d="M6 1.500h9v12L9 15H2V9" fill="#dceaf6" stroke={B} strokeWidth="1.400" /><path d="M12 3L8 9v5" stroke={B} /><path d="M0 0h6v6L3 9 0 6z" fill="#e07715" stroke="none" /><circle cx="3" cy="3" r="1" fill="#fff" stroke="none" /><circle cx="15" cy="10" r="2" fill="#e07715" stroke="none" /><circle cx="13" cy="14" r="2" fill="#e07715" stroke="none" /></>,
  <g stroke="#8b2f97" strokeWidth="1.200"><path d="M5 .5h6L15.500 8 11 15.500H5L.5 8z" /><path d="M8 4.500L4.500 8 8 11.500 11.500 8zM5 .5l3 4 3-4M5 15.500l3-4 3 4M.5 8h4M11.500 8h4" /></g>,
  <g stroke="#2f86c8" strokeWidth="1.200"><path d="M.5 1.500H10L15.500 8 10 14.500H.5L5.500 8z" fill="#fff" /><path d="M3 4.500L8 1.500M5 8l6-5.500M2 13L13 5M6 14.500L15 8" /></g>,
  <path d="M1 6.500h2v2H1zM7 6.500h2v2H7zM13 6.500h2v2h-2z" fill="#797775" stroke="none" />,
];

function VisPane() {
  return (
    <div className="flex h-[544px] w-[180px] shrink-0 flex-col overflow-hidden bg-[#f3f2f1] text-[12px] text-[#3b3a39]">
      <div className="flex h-[48px] items-center justify-between pl-[12px] pr-[12px]">
        <T w={109} className="text-[16px] font-semibold text-[#484644]">Visualizaciones</T>
        <Svg w={8} h={12} className="mt-[-4px]"><path d="M1 .5L6.500 6 1 11.500" /></Svg>
      </div>
      <div className="grid shrink-0 grid-cols-[repeat(6,28px)] gap-y-[8px] pb-[11px] pl-[5px] pt-[4px]">
        {visIcons.map((ic, i) => (
          <svg key={i} width="17" height="16" viewBox="0 0 17 16" fill="none" stroke={D} strokeWidth="1.150" className="block overflow-visible">
            {ic}
          </svg>
        ))}
      </div>
      <div className="flex h-[30px] shrink-0 items-center border-b border-t border-[#d2d0ce] pl-[5px] [border-top-style:dashed]">
        <Svg w={18} h={15}>
          <path d="M2 13a7 7 0 0 1 1-6" stroke="#2ee04a" strokeWidth="4" />
          <path d="M3 7a7 7 0 0 1 12 0" stroke="#fff200" strokeWidth="4" />
          <path d="M15 8.500a6 6 0 0 1 1 5" stroke="#f01414" strokeWidth="4" />
          <circle cx="9" cy="10.500" r="1.500" fill="#4a90d0" stroke="none" />
          <path d="M9 10.500l4-3.500" stroke="#4a90d0" />
        </Svg>
        <Svg w={18} h={18} className="ml-[10px]">
          <path d="M0 3h18v12H0z" fill="#fff" stroke="none" />
          <path d="M1 1h16M0 17h3M5 17h8M15 17h2" stroke="#8a8886" strokeWidth="1.600" strokeDasharray="2 .6" />
          <rect x="3" y="4" width="12" height="9" fill="#4a80b8" stroke="#3a6a9c" />
        </Svg>
      </div>
      <div className="flex h-[32px] shrink-0 items-end pl-[21px]">
        <Svg w={22} h={22} className="mb-[3px]">
          <path d="M1 1.500h16" strokeWidth="1.300" />
          <path d="M1.500 4.500h19v6h-19zM1.500 13.500h19v6h-19z" strokeDasharray="2 1" strokeWidth="1.200" stroke="#252423" />
        </Svg>
        <Svg w={20} h={22} className="mb-[2px] ml-[19px]">
          <path d="M1.500 1.500h14v4h-14zM15.500 3.500h2.500v5H9.500v3M7.500 11.500h4v9h-4z" strokeWidth="1.200" stroke="#252423" />
        </Svg>
      </div>
      <div className="ml-[12px] h-[4px] w-[40px] shrink-0 rounded-full bg-[#f2c811]" />
      <div className="mt-[5px] h-[18px] shrink-0 pl-[12px] leading-[19px]"><T w={38}>Valores</T></div>
      <div className="mx-[4px] mt-[4px] flex h-[29px] w-[170px] shrink-0 items-center border border-dashed border-[#b3b0ad] bg-white pl-[10px] text-[#252423]">
        <T w={155}>Agregar campos de datos a...</T>
      </div>
      <div className="mt-[12px] h-[24px] shrink-0 pl-[14px] text-[16px] font-semibold leading-[23px] text-[#484644]"><T w={120}>Obtener detalles</T></div>
      <div className="mt-[10px] h-[20px] shrink-0 pl-[9px] leading-[20px]"><T w={112}>Entre varios informes</T></div>
      <div className="mt-[9px] flex h-[20px] shrink-0 items-center pl-[18px]">
        <T w={54}>Desactivar</T>
        <Svg w={30} h={12} className="ml-[4px]"><circle cx="6" cy="6" r="5" stroke="#605e5c" strokeWidth="1.800" /><path d="M11 6h19" stroke="#605e5c" strokeWidth="1.800" /></Svg>
      </div>
      <div className="mt-[15px] h-[20px] shrink-0 pl-[9px] leading-[20px]"><T w={137}>Mantener todos los filtros</T></div>
      <div className="mt-[9px] flex h-[20px] shrink-0 items-center pl-[18px]">
        <T w={36}>Activar</T>
        <Svg w={30} h={12} className="ml-[4px]"><path d="M0 6h19" stroke="#605e5c" strokeWidth="1.800" /><circle cx="24" cy="6" r="6" fill="#605e5c" stroke="none" /></Svg>
      </div>
      <div className="mx-[4px] mt-[11px] flex h-[26px] w-[170px] shrink-0 items-center border border-dashed border-[#b3b0ad] bg-white pl-[8px] pt-[1px] text-[#252423]">
        <T w={152}>Agregue los campos de ob...</T>
      </div>
    </div>
  );
}

function FieldsPane() {
  const rows = [["Consolidado General", 110], ["tbInfContratos_BI", 92], ["tbInfValorGanado_BI", 108]];
  return (
    <div className="flex h-[544px] flex-1 flex-col border-l border-[#d2d0ce] bg-[#f3f2f1] text-[#3b3a39]">
      <div className="flex h-[38px] items-center justify-between pl-[8px] pr-[7px]">
        <T w={59} className="pt-px text-[16px] font-semibold text-[#252423]">Campos</T>
        <Svg w={14} h={13}><path d="M1.500 .5l5 6-5 6M7 .5l5 6-5 6" strokeWidth="1.200" /></Svg>
      </div>
      <div className="mx-[4px] mt-[7px] flex h-[27px] items-center rounded-[2px] border border-[#605e5c] bg-white pl-[8px] text-[13px]">
        <Svg s={15}><circle cx="9" cy="5.500" r="4.500" /><path d="M5.500 9L.5 14" /></Svg>
        <T w={40} className="ml-[6px] pt-px">Buscar</T>
      </div>
      <div className="mt-[10px] flex flex-col text-[12px]">
        {rows.map(([t, w]) => (
          <div key={t} className="flex h-6 items-center pl-[9px]">
            <Svg w={8} h={12}><path d="M1 .5L6.500 6 1 11.500" stroke="#797775" /></Svg>
            <Svg w={14} h={12} className="ml-[4px]"><path d="M.5 .5h13v11H.5zM.5 3.500h13M.5 6h13M.5 8.700h13M5 3.500v8M9.500 3.500v8" /></Svg>
            <T w={w} className="ml-[6px]">{t}</T>
          </div>
        ))}
      </div>
    </div>
  );
}

/* ---------- page tabs, status, taskbar ---------- */
function PageTabs() {
  return (
    <div className="flex h-[35px] w-[965px] bg-[#f3f2f1] text-[12px] text-[#3b3a39]">
      <div className="flex w-[41px] items-center justify-between border-x border-[#c8c6c4] px-[5px]">
        <Svg w={6} h={8}><path d="M5 0L1 4l4 4z" fill={G} stroke="none" /></Svg>
        <Svg w={6} h={8}><path d="M1 0l4 4-4 4z" fill={G} stroke="none" /></Svg>
      </div>
      <div className="flex w-[89px] items-center justify-center border-r border-[#d2d0ce]"><T w={49}>Resumen</T></div>
      <div className="flex w-[69px] items-center justify-center border-r border-[#d2d0ce]"><T w={28}>Junta</T></div>
      <div className="flex w-[112px] items-center justify-center border-b-4 border-r border-b-[#f2c811] border-r-[#d2d0ce] bg-white pt-[4px] font-semibold text-[#252423]"><T w={70}>ValorGanado</T></div>
      <div className="flex w-[166px] items-center justify-center border-r border-[#c8c6c4]"><T w={126}>Gráfica de valor ganado</T></div>
      <div className="mb-[1px] mt-[2px] flex w-[40px] items-center justify-center bg-[#f2c811]">
        <Svg s={11}><path d="M5.500 0v11M0 5.500h11" stroke="#797775" strokeWidth="3" /></Svg>
      </div>
    </div>
  );
}

function TaskItem({ width, children, active, line }) {
  return (
    <div className={"flex h-10 flex-col items-center " + width + (active ? " bg-[#56574c]" : "")}>
      <div className="flex h-[38px] items-center pt-[2px]">{children}</div>
      {line && <div className={"h-[2px] bg-[#76b9ed] " + (active ? "w-[48px]" : "w-[40px]")} />}
    </div>
  );
}

function Taskbar() {
  return (
    <div className="flex h-10 bg-[#2a2b20] text-white">
      <div className="flex w-12 items-center justify-center bg-[#2c2c26]">
        <Svg s={16}><path d="M0 2.300l6.700-1v6.200H0zM7.700 1.200L16 0v7.500H7.700zM0 8.500h6.700v6.200L0 13.700zM7.700 8.500H16V16l-8.300-1.200z" fill="#fff" stroke="none" /></Svg>
      </div>
      <div className="flex w-[344px] items-center border border-[#cfcfcf] bg-[#f2f2f2] pl-[11px] text-[14px] text-[#2b2b2b]">
        <Svg s={17}><circle cx="10" cy="6.500" r="5.300" strokeWidth="1.400" /><path d="M6.500 10.500L1 16.500" strokeWidth="1.400" /></Svg>
        <T w={161} className="ml-[11px]">Escribe aquí para buscar</T>
      </div>
      <TaskItem width="w-[48px]">
        <Svg s={18}><circle cx="9" cy="9" r="6.800" stroke="#fff" strokeWidth="2" /></Svg>
      </TaskItem>
      <TaskItem width="w-[48px]">
        <Svg s={18}><path d="M1.500 1v2.500h10V1M1.500 17v-2.500h10V17M1.500 6h10v6h-10zM15.500 1v4M15.500 9v8M14 7h3" stroke="#fff" strokeWidth="1.200" /></Svg>
      </TaskItem>
      <TaskItem width="w-[54px]" line>
        <Svg s={22}>
          <circle cx="11" cy="11" r="11" fill="#fbc116" stroke="none" />
          <path d="M1.500 5.500A11 11 0 0 1 20.500 5.500H11L6.500 13z" fill="#e33b2e" stroke="none" />
          <path d="M1.500 5.500A11 11 0 0 0 10 22l5-8.500H6.300z" fill="#22a04b" stroke="none" />
          <circle cx="11" cy="11" r="5.300" fill="#fff" stroke="none" /><circle cx="11" cy="11" r="4.200" fill="#3d80ee" stroke="none" />
        </Svg>
      </TaskItem>
      <TaskItem width="w-[44px]" line>
        <Svg w={22} h={20}>
          <path d="M1 1h7l2 2h10v16H1z" fill="#e8a91c" stroke="none" /><path d="M1 5h20v14H1z" fill="#ffd663" stroke="none" />
          <path d="M4 19v-7h14v7h-4v-3H8v3z" fill="#3f93dd" stroke="none" />
        </Svg>
      </TaskItem>
      <TaskItem width="w-[54px]" line>
        <Svg w={26} h={24}>
          <circle cx="14" cy="3.500" r="3" fill="#7b83eb" stroke="none" /><circle cx="21" cy="5" r="2.300" fill="#5059c9" stroke="none" />
          <path d="M17 8h8v8c0 3-4 5-7 3z" fill="#5059c9" stroke="none" /><path d="M8 8h12v9c0 6-11 6-12 0z" fill="#7b83eb" stroke="none" />
          <rect x="1" y="5" width="12" height="12" rx="1" fill="#4049b0" stroke="none" /><path d="M4 8h6M7 8v7" stroke="#fff" strokeWidth="1.500" />
          <circle cx="20" cy="18" r="5.500" fill="#92c353" stroke="#fff" /><path d="M17.500 18l2 2 3.500-3.500" stroke="#fff" strokeWidth="1.500" />
        </Svg>
      </TaskItem>
      <TaskItem width="w-[44px]" line>
        <Svg s={24}>
          <path d="M17 0l6 2.500v19L17 24 8 15.500 3 19l-2-1V6l2-1 5 3.500z" fill="#8c4fd8" stroke="none" />
          <path d="M17 0l6 2.500v19L17 24z" fill="#b179f1" stroke="none" /><path d="M17 7l-6.500 5 6.500 5zM3.500 9v6L7 12z" fill="#2a2b20" stroke="none" />
        </Svg>
      </TaskItem>
      <TaskItem width="w-[54px]" line>
        <Svg w={22} h={22}>
          <path d="M12 2.500h9.500v17H12" fill="#fff" stroke="#1e7145" /><path d="M13 6h7M13 9h7M13 12h7M13 15h7" stroke="#1e7145" strokeWidth="1.500" />
          <path d="M0 2.500L13 0v22L0 19.500z" fill="#1e7145" stroke="none" /><path d="M4 7l5 8M9 7l-5 8" stroke="#fff" strokeWidth="1.800" />
        </Svg>
      </TaskItem>
      <TaskItem width="w-[48px] ml-[-2px]" line active>
        <Svg w={22} h={24}>
          <rect x="12" y="0" width="9" height="24" rx="1.500" fill="#e3a10f" stroke="none" />
          <rect x="7" y="6" width="9" height="18" rx="1.500" fill="#f4c72c" stroke="none" />
          <rect x="1" y="12" width="9" height="12" rx="1.500" fill="#fbe07a" stroke="none" />
        </Svg>
      </TaskItem>
      <div className="flex flex-1 items-center pl-[300px] text-[12px]">
        <Svg w={24} h={24}>
          <circle cx="11" cy="11" r="10" fill="#1ba0dc" stroke="#fff" strokeWidth="1.500" />
          <path d="M7.500 8.500c0-5 7.500-4.500 7 0-.3 2.500-3.500 2.500-3.500 5.500M11 16v2.500" stroke="#fff" strokeWidth="2.400" />
          <circle cx="18.500" cy="18" r="5" fill="#e81123" stroke="none" /><path d="M18.500 15v3.500M18.500 20v1.300" stroke="#fff" strokeWidth="1.400" />
        </Svg>
        <Svg w={12} h={8} className="ml-[9px]"><path d="M1 7l5-5 5 5" stroke="#fff" strokeWidth="1.200" /></Svg>
        <Svg w={18} h={16} className="ml-[9px]">
          <path d="M6.500 4.500h9v8h-9zM16.500 7v3M3 1v3M6 1v3M1.500 4h6v2c0 2-2 3-3 3v5" stroke="#fff" /><path d="M7 5h3v7H7z" fill="#fff" stroke="none" />
        </Svg>
        <Svg s={16} className="ml-[8px]"><path d="M2 15C2 8 7 2 14 2M5 15c0-5 4-9 9-10M8 15c0-3 3-6 6-7M11 15c0-2 1-3 3-4" stroke="#d8d8d4" /></Svg>
        <Svg w={18} h={14} className="ml-[5px]"><path d="M1 5h3l3.500-3v10L4 9H1zM10 4.500c1.300 1.500 1.300 3.500 0 5M12 2.500c2.300 3 2.300 6 0 9M14.200 1c3.300 4 3.300 8 0 12" stroke="#d8d8d4" /></Svg>
        <T w={19} className="ml-[12px]">ESP</T>
        <div className="ml-[13px] flex w-[62px] flex-col items-center leading-[18px]">
          <T w={51}>9:55 a. m.</T>
          <T w={58}>26/01/2022</T>
        </div>
        <Svg w={26} h={24} className="ml-[15px] mt-[4px]">
          <path d="M1 1h15v11H9l-4 4v-4H1z" fill="#fff" stroke="none" /><path d="M4 4h9M4 6.500h9M4 9h6" stroke={D} />
          <circle cx="16" cy="15" r="8" fill="#3d3f40" stroke="#8a8a8a" />
          <text x="13" y="19" fontSize="11" fontFamily="Open Sans" fill="#fff" stroke="none">3</text>
        </Svg>
        <div className="ml-auto mr-[4px] h-10 w-px bg-[#55564c]" />
      </div>
    </div>
  );
}

export default function App() {
  return (
    <div className="flex h-[768px] w-[1366px] flex-col overflow-hidden bg-[#f3f2f1] font-['Open_Sans','Noto_Sans',sans-serif]">
      <TitleBar />
      <MenuTabs />
      <Ribbon />
      <div className="flex h-[544px] shrink-0">
        <Rail />
        <div className="flex w-[965px] shrink-0 flex-col">
          <div className="flex h-[509px]">
            <Report />
            <FiltersStrip />
          </div>
          <PageTabs />
        </div>
        <VisPane />
        <FieldsPane />
      </div>
      <div className="flex h-[24px] shrink-0 items-center justify-between border-t border-[#d2d0ce] px-[5px] text-[12px] text-[#484644]">
        <T w={71}>Página 3 de 4</T>
        <T w={246}>Actualización disponible (clic para descargarla)</T>
      </div>
      <Taskbar />
    </div>
  );
}
